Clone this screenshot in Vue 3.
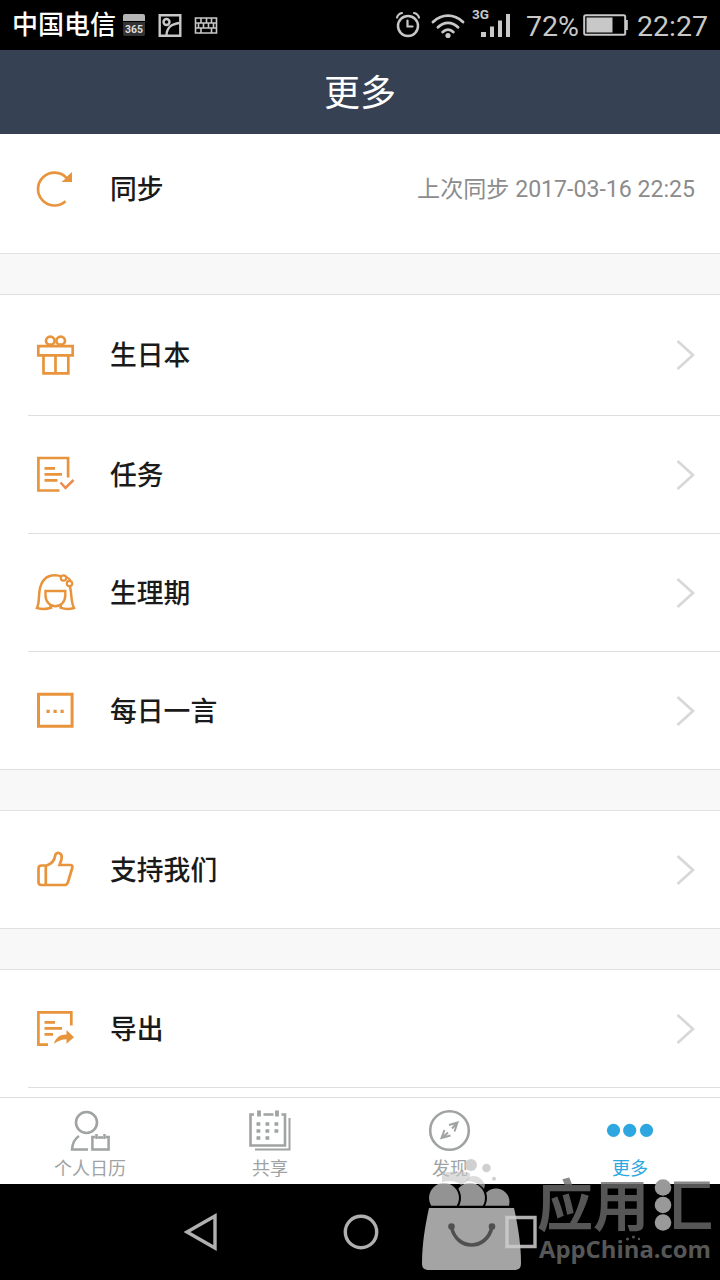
<script setup>
import {ref} from 'vue';

const lastSync = ref('2017-03-16 22:25');
const activeTab = ref('more');

// Menu sections, each one is separated by a gray gap
const sections = [
  [
    {icon: 'gift', title: '生日本'},
    {icon: 'task', title: '任务'},
    {icon: 'girl', title: '生理期'},
    {icon: 'quote', title: '每日一言'},
  ],
  [
    {icon: 'like', title: '支持我们'},
  ],
  [
    {icon: 'export', title: '导出'},
  ],
];

const tabs = [
  {name: 'personal', title: '个人日历'},
  {name: 'share', title: '共享'},
  {name: 'discover', title: '发现'},
  {name: 'more', title: '更多'},
];
</script>

<template>
  <div class="screen">

    <!-- status bar -->
    <div class="status">
      <span class="carrier">中国电信</span>
      <svg class="status-left" width="100" height="30" viewBox="0 0 100 30">
        <path d="M3 4h18a2 2 0 0 1 2 2v5H1V6a2 2 0 0 1 2-2z" fill="#b5b5b5"/>
        <path d="M1 12h22v12a2 2 0 0 1-2 2H3a2 2 0 0 1-2-2z" fill="#333"/>
        <text x="3" y="22.500" textLength="18" lengthAdjust="spacingAndGlyphs" class="mini">365</text>
        <g fill="none" stroke="#c8c8c8" stroke-width="2.4">
          <path d="M37.700 5.200h20.600v20.600H37.700z"/>
          <circle cx="44.500" cy="12" r="3"/>
          <path d="M44.500 25c.5-8 5-11 13-12"/>
        </g>
        <g fill="none" stroke="#c8c8c8" stroke-width="1.600">
          <path d="M73.500 8h21v15h-21zM73.500 13h21M73.500 18h21M79 8v5M84.500 8v5M89.500 8v5M76.500 13v5M81.500 13v5M86.500 13v5M91.500 13v5M79 18v5M89.500 18v5"/>
        </g>
      </svg>
      <svg class="status-right" width="120" height="40" viewBox="0 0 120 40">
        <g fill="none" stroke="#c8c8c8" stroke-linecap="round">
          <circle cx="13" cy="21" r="10" stroke-width="2.500"/>
          <path d="M12.500 15.500v6h5M2 12.500c.8-2.500 3-4.200 5-4.500M24 12.500c-.8-2.500-3-4.200-5-4.500" stroke-width="2.200"/>
          <path d="M38 17c9-8.500 21-8.500 30 0M43 22.200c6-5.800 14-5.800 20 0M47.700 27c3.200-3 7.400-3 10.600 0" stroke-width="2.900"/>
        </g>
        <circle cx="53" cy="30.500" r="2.600" fill="#c8c8c8"/>
        <text x="77" y="13.500" textLength="17" lengthAdjust="spacingAndGlyphs" class="net">3G</text>
        <path d="M86 27h5v5h-5zM95 21.500h4V32h-4zM103 15.500h4V32h-4zM111 9h4v23h-4z" fill="#c8c8c8"/>
      </svg>
      <span class="percent">72%</span>
      <svg class="battery" width="46" height="24" viewBox="0 0 46 24">
        <rect x="1.200" y="2.200" width="41" height="19.600" rx="1.500" fill="none" stroke="#c8c8c8" stroke-width="2"/>
        <path d="M3.500 4.500h26v15h-26zM43 7h1.800v10H43z" fill="#c8c8c8"/>
      </svg>
      <span class="clock">22:27</span>
    </div>

    <div class="header">更多</div>

    <div class="list">
      <!-- sync -->
      <div class="section">
        <div class="row sync">
          <svg class="icon" viewBox="0 0 48 49">
            <path d="M34.500 37.200A16.400 16.400 0 1 1 35.500 14"/>
            <path class="solid" d="M41 8v10H30.500l3.500-3 2.500-3z"/>
          </svg>
          <span class="title">同步</span>
          <span class="info">上次同步 {{ lastSync }}</span>
        </div>
      </div>

      <div v-for="(section, i) in sections" :key="i" class="section">
        <div v-for="item in section" :key="item.icon" class="row" :class="item.icon">
          <svg class="icon" viewBox="0 0 48 49">
            <template v-if="item.icon === 'gift'">
              <path d="M7.300 16.200h34.400v9.200H7.300zM12.500 26v17.400h24.800V26M24.500 26v17"/>
              <ellipse cx="19.300" cy="10.700" rx="4.300" ry="4"/>
              <ellipse cx="29.700" cy="10.700" rx="4.300" ry="4"/>
            </template>
            <template v-else-if="item.icon === 'task'">
              <path d="M28.500 40.500H7.400V8h29.700v19.500M13.500 18.300H24M13.500 24.300H31M13.500 30.300h13"/>
              <path class="accent" d="M29.500 32.500l5 5.500 8-8"/>
            </template>
            <template v-else-if="item.icon === 'girl'">
              <path d="M14.500 23h19.800v4c0 6.500-4 11.300-9.900 11.300S14.500 33.500 14.500 27z" stroke-width="2.400"/>
              <path d="M19 37l1 2.700c-4.500 1.600-9.500 1.500-14 .3 2.500-5.500 1.500-11 2.500-17C10 13 15.500 7.300 24 7.300c2.800 0 5 .5 7 1.500M38.700 18c2.300 6.500.8 15.500 4.300 22-4 1.300-9 1.500-13.500-.3l.5-2.700" stroke-width="2.500"/>
              <circle cx="32.500" cy="10" r="2.700" stroke-width="2.200"/>
              <circle cx="38.500" cy="15.500" r="2.700" stroke-width="2.200"/>
              <path d="M35 8.500l4.500 3.500" stroke-width="2.200"/>
            </template>
            <template v-else-if="item.icon === 'quote'">
              <path d="M7.500 8.200h33.600v32H7.500z" stroke-width="3"/>
              <path class="solid" d="M15.500 23.700h3.200v3.200h-3.200zM22.500 23.700h3.200v3.200h-3.200zM29.500 23.700h3.200v3.200h-3.200z"/>
            </template>
            <template v-else-if="item.icon === 'like'">
              <path d="M15.500 20.500c5-1.500 8-5 8.700-10 .5-3.800 6.800-3.500 6.500 2 0 2.500-1.200 5.300-2.200 7.500H39c2.300 0 2.800 1 2.200 3L37 37c-.8 2.500-1.500 3-4 3H10.500c-2.300 0-3-.8-3-3V23.500c0-2.300.8-3 3-3zM14.800 20.500V40"/>
            </template>
            <template v-else>
              <path d="M17 40.600H7.400V8.300h32.900v13.200M13.500 18.300H24M13.500 24.300H31M13.500 30.300H22"/>
              <path class="solid" d="M23 39.700c1.500-6 6-9.200 12.500-9.200V26l7.500 7.200-7.500 6.500v-4.500c-5 0-8 1.500-12.500 4.500z"/>
            </template>
          </svg>
          <span class="title">{{ item.title }}</span>
          <svg class="arrow" width="20" height="32" viewBox="0 0 20 32">
            <path d="M2.500 2l15.500 14L2.500 30"/>
          </svg>
        </div>
      </div>
    </div>

    <!-- tab bar -->
    <div class="tabs">
      <div v-for="tab in tabs" :key="tab.name" class="tab" :class="{active: tab.name === activeTab}">
        <svg class="tab-icon" width="50" height="46" viewBox="0 0 50 46">
          <template v-if="tab.name === 'personal'">
            <circle cx="21.500" cy="14.500" r="10.500"/>
            <path d="M14 28c-4 2.500-6.500 7-7 13.500h16M30 29h-2.600v12.500h16.200V29H41M33 29.500h5" stroke-width="2.500"/>
            <path d="M31.500 26v5M39.500 26v5" stroke-width="2.500"/>
          </template>
          <template v-else-if="tab.name === 'share'">
            <path d="M9 6.500H5.500v31H40v-31h-3.500M18.500 6.500h10"/>
            <path d="M14 2.500v6M32 2.500v6" stroke-width="3.800"/>
            <path d="M44.500 10v31.500H10" stroke-width="2"/>
            <path d="M11.500 16h22M11.500 23h22" stroke-width="3.600" stroke-dasharray="3.800 5.200"/>
            <path d="M11.500 30h14" stroke-width="3.600" stroke-dasharray="3.800 5.200"/>
          </template>
          <template v-else-if="tab.name === 'discover'">
            <circle cx="24.500" cy="22.500" r="19.300"/>
            <path d="M24 17l8.500-2.500-3 9M19.500 22l-3 8 9-2.500M17 30l6-5.500M32 15l-5 5.500" stroke-width="2"/>
          </template>
          <template v-else>
            <circle class="dot" cx="8.500" cy="22.300" r="6.600"/>
            <circle class="dot" cx="24.700" cy="22.300" r="6.600"/>
            <circle class="dot" cx="41.500" cy="22.300" r="6.600"/>
          </template>
        </svg>
        <span class="tab-title">{{ tab.title }}</span>
      </div>
    </div>

    <!-- system navigation -->
    <div class="nav">
      <svg width="36" height="40" viewBox="0 0 36 40"><path d="M32 4v32L4 20z"/></svg>
      <svg width="36" height="40" viewBox="0 0 36 40"><circle cx="18" cy="20" r="15.700"/></svg>
      <svg width="36" height="40" viewBox="0 0 36 40"><path d="M4 5.500h28v29H4z"/></svg>
    </div>

    <!-- store watermark over the bottom bars -->
    <svg class="watermark" width="310" height="126" viewBox="0 0 310 126">
      <defs>
        <mask id="cut-first">
          <path d="M0 0h120v49.800H0z" fill="#fff"/>
          <circle cx="34" cy="42" r="17" fill="#000"/>
        </mask>
        <mask id="cut-second">
          <path d="M0 0h120v49.800H0z" fill="#fff"/>
          <circle cx="60" cy="42" r="17" fill="#000"/>
        </mask>
        <clipPath id="top-only">
          <path d="M0 0h120v49.800H0z"/>
        </clipPath>
        <clipPath id="right-part">
          <path d="M264 0h46v90h-46z"/>
        </clipPath>
      </defs>
      <g fill="#c4c4c4" fill-opacity=".8">
        <circle cx="61" cy="9" r="6"/>
        <circle cx="76.500" cy="12" r="4.300"/>
        <circle cx="84" cy="22.700" r="2"/>
        <path d="M32 17c8-2 18-2 28 0 1 5-3 10-9 12-4-4-11-5-19-3z" fill-opacity=".6"/>
        <path d="M56 24c4-6 15-6 19 5l-1 4c-4-5-10-8-18-8z" fill-opacity=".6"/>
      </g>
      <g fill="#b8b8b8" fill-opacity=".8">
        <circle cx="34" cy="42" r="15" clip-path="url(#top-only)"/>
        <circle cx="60" cy="42" r="15" mask="url(#cut-first)"/>
        <circle cx="86" cy="46" r="13.500" mask="url(#cut-second)"/>
      </g>
      <path d="M19 52h85c4 18 7 37 7 55 0 5-2 7-7 7H19c-5 0-7-2-7-7 0-18 3-37 7-55z" fill="#cdcdcd" fill-opacity=".8"/>
      <g class="smile">
        <path d="M41.500 71c5 24 35 24 40.500 0"/>
        <circle cx="41.500" cy="70.500" r="1.500"/>
        <circle cx="82" cy="70.500" r="1.500"/>
      </g>
      <text x="127" y="70" textLength="112" lengthAdjust="spacingAndGlyphs" class="brand">应用</text>
      <text x="244" y="70" textLength="59" lengthAdjust="spacingAndGlyphs" class="brand" clip-path="url(#right-part)">汇</text>
      <g fill="#999">
        <circle cx="253" cy="31.500" r="8.300"/>
        <circle cx="253" cy="49" r="8.300"/>
        <circle cx="253" cy="66.500" r="8.300"/>
      </g>
      <text x="129" y="102" textLength="172" lengthAdjust="spacingAndGlyphs" class="site">AppChina.com</text>
      <g fill="#555">
        <circle cx="217.500" cy="83" r="1.500"/>
        <circle cx="223.500" cy="81" r="1.500"/>
        <circle cx="229" cy="83" r="1.200"/>
      </g>
    </svg>

  </div>
</template>

<style>
body {
  background: #fff;
}
</style>

<style scoped>
.screen {
  position: relative;
  display: flex;
  flex-direction: column;
  width: 720px;
  height: 1280px;
  overflow: hidden;
  background: #fff;
  font-family: Roboto, "Noto Sans CJK SC", sans-serif;
}

svg {
  display: block;
  flex-shrink: 0;
}

.status {
  display: flex;
  align-items: center;
  box-sizing: border-box;
  height: 50px;
  padding: 0 12px;
  background: #000;
  color: #c8c8c8;
  font-size: 28.5px;
  line-height: 50px;
  white-space: nowrap;
}

.carrier {
  width: 110px;
  color: #fff;
  font-size: 26px;
  font-weight: 500;
  line-height: 50px;
}

.status-right {
  margin-left: auto;
}

.mini {
  fill: #ddd;
  font-size: 10px;
  font-weight: 700;
}

.net {
  fill: #c8c8c8;
  font-size: 13.5px;
  font-weight: 700;
}

.percent {
  width: 57px;
  margin-left: 11px;
  padding-top: 3px;
}

.clock {
  width: 71px;
  margin-left: 8px;
  padding-top: 3px;
}

.header {
  box-sizing: border-box;
  height: 84px;
  padding-top: 2px;
  background: #364153;
  color: #fff;
  font-size: 36px;
  line-height: 84px;
  text-align: center;
}

.list {
  flex: 1;
  overflow: hidden;
  background: #f8f8f8;
}

.section {
  background: #fff;
  border-top: 1px solid #e0e0e0;
  border-bottom: 1px solid #e0e0e0;
  margin-bottom: 40px;
}

.section:first-child {
  border-top: none;
}

.section:last-child {
  margin-bottom: 0;
  border-bottom: none;
}

.row {
  position: relative;
  display: flex;
  align-items: center;
  box-sizing: border-box;
  height: 118px;
  padding: 0 25px 1px 31px;
}

.row:last-child {
  height: 117px;
  padding-bottom: 0;
}

.row.gift {
  height: 121px;
  padding: 1px 25px 3px 31px;
}

.row.sync {
  height: 119px;
  padding-bottom: 10px;
}

.row.export {
  height: 128px;
  padding-bottom: 11px;
}

/* divider starts after the left inset */
.row:not(:last-child)::after,
.row.export::after {
  content: "";
  position: absolute;
  left: 28px;
  right: 0;
  bottom: 0;
  height: 1px;
  background: #dedede;
}

.row.export::after {
  bottom: 10px;
}

.icon {
  width: 48px;
  height: 49px;
  margin-right: 31px;
  fill: none;
  stroke: #e8943c;
  stroke-width: 2.7;
}

.icon .solid {
  fill: #e8943c;
  stroke: none;
}

.icon .accent {
  stroke: #ee8a4a;
  stroke-width: 2.5;
}

.title {
  flex: 1;
  padding-top: 3px;
  color: #1a1a1a;
  font-size: 26.8px;
  font-weight: 500;
  line-height: 40px;
}

.info {
  padding-bottom: 3px;
  color: #8c8c8c;
  font-size: 23.1px;
}

.arrow {
  fill: none;
  stroke: #d8d8d8;
  stroke-width: 2.8;
}

.tabs {
  display: flex;
  box-sizing: border-box;
  height: 87px;
  border-top: 1px solid #dcdcdc;
  background: #fff;
}

.tab {
  display: flex;
  flex: 1;
  flex-direction: column;
  align-items: center;
  padding-top: 10px;
  color: #a0a3a3;
}

.tab.active {
  color: #2ea7e0;
}

.tab-icon {
  fill: none;
  stroke: #a0a3a3;
  stroke-width: 2.6;
}

.tab-icon .dot {
  fill: #2ea7e0;
  stroke: none;
}

.tab-title {
  font-size: 18px;
  line-height: 30px;
}

.nav {
  display: flex;
  align-items: center;
  justify-content: center;
  gap: 124px;
  height: 96px;
  padding-left: 2px;
  background: #000;
  fill: none;
  stroke: #b0b0b0;
  stroke-width: 3.4;
}

.watermark {
  position: absolute;
  left: 410px;
  top: 1156px;
}

.smile {
  fill: #505050;
  stroke: #505050;
  stroke-width: 3.6;
}

.smile path {
  fill: none;
}

.brand {
  fill: rgba(108, 108, 108, 0.8);
  font-family: "Noto Sans CJK SC", sans-serif;
  font-size: 56px;
  font-weight: 700;
}

.site {
  fill: #575757;
  font-family: "Open Sans", sans-serif;
  font-size: 24px;
  font-weight: 700;
}
</style>
